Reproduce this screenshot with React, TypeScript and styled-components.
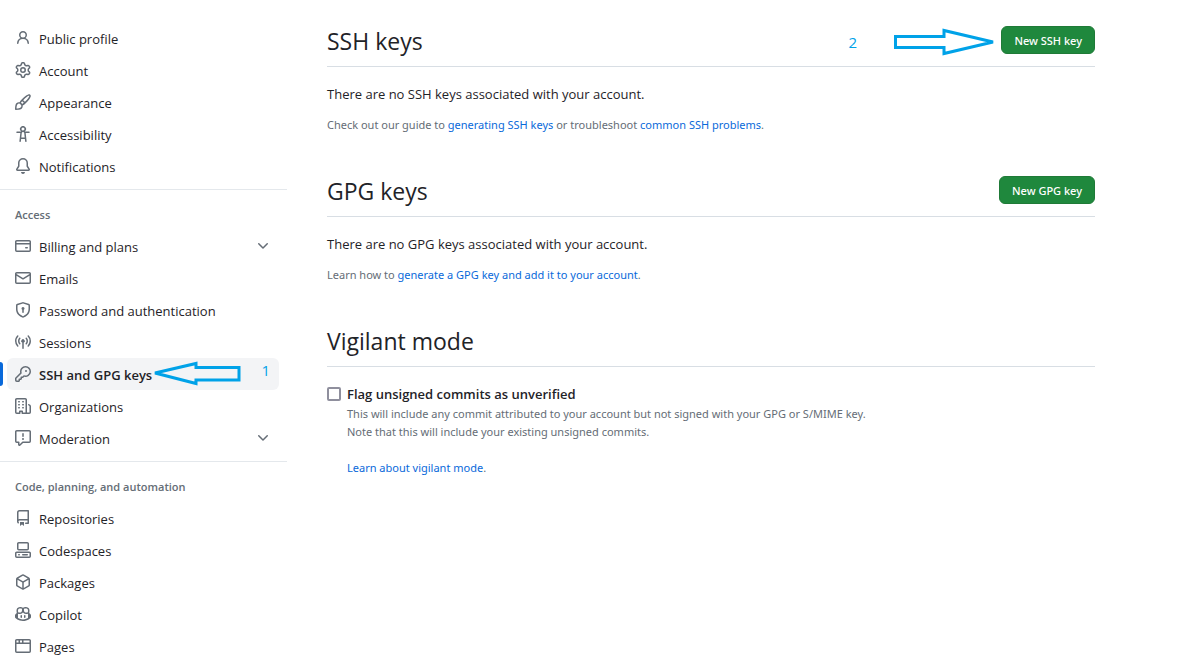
import React, { useState } from "react";
import styled, { createGlobalStyle, css } from "styled-components";

const GlobalStyle = createGlobalStyle`
  *, *::before, *::after { box-sizing: border-box; }
  body {
    margin: 0;
    background: #ffffff;
    color: #1f2328;
    font-family: "Segoe UI", "Open Sans", "Noto Sans", sans-serif;
    font-size: 13px;
    line-height: 20px;
  }
`;

const icons = {
  person:
    "M10.561 8.073a6.005 6.005 0 0 1 3.432 5.142.75.75 0 1 1-1.498.07 4.5 4.5 0 0 0-8.99 0 .75.75 0 0 1-1.498-.07 6.004 6.004 0 0 1 3.431-5.142 3.999 3.999 0 1 1 5.123 0ZM10.5 5a2.5 2.5 0 1 0-5 0 2.5 2.5 0 0 0 5 0Z",
  gear:
    "M8 0a8.2 8.2 0 0 1 .701.031C9.444.095 9.99.645 10.16 1.29l.288 1.107c.018.066.079.158.212.224.231.114.454.243.668.386.123.082.233.09.299.071l1.103-.303c.644-.176 1.392.021 1.82.63.27.385.506.792.704 1.218.315.675.111 1.422-.364 1.891l-.814.806c-.049.048-.098.147-.088.294.016.257.016.515 0 .772-.01.147.038.246.088.294l.814.806c.475.469.679 1.216.364 1.891a7.977 7.977 0 0 1-.704 1.217c-.428.61-1.176.807-1.82.63l-1.102-.302c-.067-.019-.177-.011-.3.071a5.909 5.909 0 0 1-.668.386c-.133.066-.194.158-.211.224l-.29 1.106c-.168.646-.715 1.196-1.458 1.26a8.006 8.006 0 0 1-1.402 0c-.743-.064-1.289-.614-1.458-1.26l-.289-1.106c-.018-.066-.079-.158-.212-.224a5.738 5.738 0 0 1-.668-.386c-.123-.082-.233-.09-.299-.071l-1.103.303c-.644.176-1.392-.021-1.82-.63a8.12 8.12 0 0 1-.704-1.218c-.315-.675-.111-1.422.363-1.891l.815-.806c.05-.048.098-.147.088-.294a6.214 6.214 0 0 1 0-.772c.01-.147-.038-.246-.088-.294l-.815-.806C.635 6.045.431 5.298.746 4.623a7.92 7.92 0 0 1 .704-1.217c.428-.61 1.176-.807 1.82-.63l1.102.302c.067.019.177.011.3-.071.214-.143.437-.272.668-.386.133-.066.194-.158.211-.224l.29-1.106C6.009.645 6.556.095 7.299.03 7.53.01 7.764 0 8 0Zm-.571 1.525c-.036.003-.108.036-.137.146l-.289 1.105c-.147.561-.549.967-.998 1.189-.173.086-.34.183-.5.29-.417.278-.97.423-1.529.27l-1.103-.303c-.109-.03-.175.016-.195.045-.22.312-.412.644-.573.99-.014.031-.021.11.059.19l.815.806c.411.406.562.957.53 1.456a4.709 4.709 0 0 0 0 .582c.032.499-.119 1.05-.53 1.456l-.815.806c-.081.08-.073.159-.059.19.162.346.353.677.573.989.02.03.085.076.195.046l1.102-.303c.56-.153 1.113-.008 1.53.27.161.107.328.204.501.29.447.222.85.629.997 1.189l.289 1.105c.029.109.101.143.137.146a6.6 6.6 0 0 0 1.142 0c.036-.003.108-.036.137-.146l.289-1.105c.147-.561.549-.967.998-1.189.173-.086.34-.183.5-.29.417-.278.97-.423 1.529-.27l1.103.303c.109.029.175-.016.195-.045.22-.313.411-.644.573-.99.014-.031.021-.11-.059-.19l-.815-.806c-.411-.406-.562-.957-.53-1.456a4.709 4.709 0 0 0 0-.582c-.032-.499.119-1.05.53-1.456l.815-.806c.081-.08.073-.159.059-.19a6.464 6.464 0 0 0-.573-.989c-.02-.03-.085-.076-.195-.046l-1.102.303c-.56.153-1.113.008-1.53-.27a4.44 4.44 0 0 0-.501-.29c-.447-.222-.85-.629-.997-1.189l-.289-1.105c-.029-.11-.101-.143-.137-.146a6.6 6.6 0 0 0-1.142 0ZM11 8a3 3 0 1 1-6 0 3 3 0 0 1 6 0ZM9.5 8a1.5 1.5 0 1 0-3.001.001A1.5 1.5 0 0 0 9.5 8Z",
  paintbrush:
    "M11.134 1.535c.7-.509 1.416-.942 2.076-1.155.649-.21 1.463-.267 2.069.34.603.601.568 1.411.368 2.07-.202.668-.624 1.39-1.125 2.096-1.011 1.424-2.496 2.987-3.775 4.249-1.098 1.084-2.132 1.839-3.04 2.3a3.744 3.744 0 0 1-1.055 3.217c-.431.431-1.065.691-1.657.861-.614.177-1.294.287-1.914.357A21.151 21.151 0 0 1 .797 16H.743l.007-.75H.749L.742 16a.75.75 0 0 1-.743-.742l.743-.008-.742.007v-.054a21.25 21.25 0 0 1 .13-2.284c.067-.647.187-1.287.358-1.914.17-.591.43-1.226.86-1.657a3.746 3.746 0 0 1 3.227-1.054c.466-.893 1.225-1.907 2.314-2.982 1.271-1.255 2.833-2.75 4.245-3.777ZM1.62 13.089c-.051.464-.086.929-.104 1.395.466-.018.932-.053 1.396-.104a10.511 10.511 0 0 0 1.668-.309c.526-.151.856-.325 1.011-.48a2.25 2.25 0 1 0-3.182-3.182c-.155.155-.329.485-.48 1.01a10.515 10.515 0 0 0-.309 1.67Zm10.396-10.34c-1.224.89-2.605 2.189-3.822 3.384l1.718 1.718c1.21-1.205 2.51-2.597 3.387-3.833.47-.662.78-1.227.912-1.662.134-.444.032-.551.009-.575h-.001V1.78c-.014-.014-.113-.113-.548.027-.432.14-.995.462-1.655.942Zm-4.832 7.266-.001.001a9.859 9.859 0 0 0 1.63-1.142L7.155 7.216a9.7 9.7 0 0 0-1.161 1.607c.482.302.889.71 1.19 1.192Z",
  accessibility:
    "M9.923 5.302c.063.063.122.129.178.198H14A.75.75 0 0 1 14 7h-3.3l.578 5.163.362 2.997a.75.75 0 0 1-1.49.18L9.868 13H6.132l-.282 2.34a.75.75 0 0 1-1.49-.18l.362-2.997L5.3 7H2a.75.75 0 0 1 0-1.5h3.9a2.54 2.54 0 0 1 .176-.198 3 3 0 1 1 3.847 0ZM9.2 7.073h-.001a1.206 1.206 0 0 0-2.398 0L6.305 11.5h3.39ZM9.5 3a1.5 1.5 0 1 0-3.001.001A1.5 1.5 0 0 0 9.5 3Z",
  bell:
    "M8 16a2 2 0 0 0 1.985-1.75c.017-.137-.097-.25-.235-.25h-3.5c-.138 0-.252.113-.235.25A2 2 0 0 0 8 16ZM3 5a5 5 0 0 1 10 0v2.947c0 .05.015.098.042.139l1.703 2.555A1.519 1.519 0 0 1 13.482 13H2.518a1.516 1.516 0 0 1-1.263-2.36l1.703-2.554A.255.255 0 0 0 3 7.947Zm5-3.5A3.5 3.5 0 0 0 4.5 5v2.947c0 .346-.102.683-.294.97l-1.703 2.556a.017.017 0 0 0-.003.01l.001.006c0 .002.002.004.004.006l.006.004.007.001h10.964l.007-.001.006-.004.004-.006.001-.007a.017.017 0 0 0-.003-.01l-1.703-2.554a1.745 1.745 0 0 1-.294-.97V5A3.5 3.5 0 0 0 8 1.5Z",
  creditCard:
    "M10.75 9a.75.75 0 0 0 0 1.5h1.5a.75.75 0 0 0 0-1.5h-1.5ZM0 3.75C0 2.784.784 2 1.75 2h12.5c.966 0 1.75.784 1.75 1.75v8.5A1.75 1.75 0 0 1 14.25 14H1.75A1.75 1.75 0 0 1 0 12.25ZM14.5 6.5h-13v5.75c0 .138.112.25.25.25h12.5a.25.25 0 0 0 .25-.25Zm0-2.75a.25.25 0 0 0-.25-.25H1.75a.25.25 0 0 0-.25.25V5h13Z",
  mail:
    "M1.75 2h12.5c.966 0 1.75.784 1.75 1.75v8.5A1.75 1.75 0 0 1 14.25 14H1.75A1.75 1.75 0 0 1 0 12.25v-8.5C0 2.784.784 2 1.75 2ZM1.5 12.251c0 .138.112.25.25.25h12.5a.25.25 0 0 0 .25-.25V5.809L8.38 9.397a.75.75 0 0 1-.76 0L1.5 5.809v6.442Zm13-8.181v-.32a.25.25 0 0 0-.25-.25H1.75a.25.25 0 0 0-.25.25v.32L8 7.88Z",
  shieldLock:
    "m8.533.133 5.25 1.68A1.75 1.75 0 0 1 15 3.48V7c0 1.566-.32 3.182-1.303 4.682-.983 1.498-2.585 2.813-5.032 3.855a1.697 1.697 0 0 1-1.33 0c-2.447-1.042-4.049-2.357-5.032-3.855C1.32 10.182 1 8.566 1 7V3.48a1.755 1.755 0 0 1 1.217-1.667l5.25-1.68a1.748 1.748 0 0 1 1.066 0Zm-.61 1.429.001.001-5.25 1.68a.251.251 0 0 0-.174.237V7c0 1.36.275 2.666 1.057 3.859.784 1.194 2.121 2.342 4.366 3.298a.196.196 0 0 0 .154 0c2.245-.957 3.582-2.103 4.366-3.297C13.225 9.666 13.5 8.358 13.5 7V3.48a.25.25 0 0 0-.174-.238l-5.25-1.68a.25.25 0 0 0-.153 0ZM9.5 6.5c0 .536-.286 1.032-.75 1.3v2.45a.75.75 0 0 1-1.5 0V7.8A1.5 1.5 0 1 1 9.5 6.5Z",
  broadcast:
    "M8.75 8.582v5.668a.75.75 0 0 1-1.5 0V8.582a1.75 1.75 0 1 1 1.5 0Zm3.983-7.125a.75.75 0 0 1 1.06.026A7.976 7.976 0 0 1 16 7c0 2.139-.84 4.083-2.207 5.517a.75.75 0 1 1-1.086-1.034A6.474 6.474 0 0 0 14.5 7a6.474 6.474 0 0 0-1.793-4.483.75.75 0 0 1 .026-1.06Zm-9.466 0c.3.286.312.76.026 1.06A6.474 6.474 0 0 0 1.5 7a6.47 6.47 0 0 0 1.793 4.483.75.75 0 0 1-1.086 1.034A7.973 7.973 0 0 1 0 7c0-2.139.84-4.083 2.207-5.517a.75.75 0 0 1 1.06-.026Zm8.556 2.321A4.988 4.988 0 0 1 13 7a4.988 4.988 0 0 1-1.177 3.222.75.75 0 1 1-1.146-.967A3.487 3.487 0 0 0 11.5 7c0-.86-.309-1.645-.823-2.255a.75.75 0 0 1 1.146-.967Zm-6.492.958A3.48 3.48 0 0 0 4.5 7a3.48 3.48 0 0 0 .823 2.255.75.75 0 0 1-1.146.967A4.981 4.981 0 0 1 3 7a4.982 4.982 0 0 1 1.188-3.236.75.75 0 1 1 1.143.972Z",
  key:
    "M10.5 0a5.499 5.499 0 1 1-1.288 10.848l-.932.932a.749.749 0 0 1-.53.22H7v.75a.749.749 0 0 1-.22.53l-.5.5a.749.749 0 0 1-.53.22H5v.75a.749.749 0 0 1-.22.53l-.5.5a.749.749 0 0 1-.53.22h-2A1.75 1.75 0 0 1 0 14.25v-2c0-.199.079-.389.22-.53l4.932-4.932A5.5 5.5 0 0 1 10.5 0Zm-4 5.5c-.001.431.069.86.205 1.269a.75.75 0 0 1-.181.768L1.5 12.56v1.69c0 .138.112.25.25.25h1.69l.06-.06v-1.19a.75.75 0 0 1 .75-.75h1.19l.06-.06v-1.19a.75.75 0 0 1 .75-.75h1.19l1.023-1.025a.75.75 0 0 1 .768-.18A4 4 0 1 0 6.5 5.5ZM11 6a1 1 0 1 1 0-2 1 1 0 0 1 0 2Z",
  organization:
    "M1.75 16A1.75 1.75 0 0 1 0 14.25V1.75C0 .784.784 0 1.75 0h8.5C11.216 0 12 .784 12 1.75v12.5c0 .085-.006.168-.018.25h2.268a.25.25 0 0 0 .25-.25V8.285a.25.25 0 0 0-.111-.208l-1.055-.703a.749.749 0 1 1 .832-1.248l1.055.703c.487.325.779.871.779 1.456v5.965A1.75 1.75 0 0 1 14.25 16h-3.5a.766.766 0 0 1-.197-.026c-.099.017-.2.026-.303.026h-3a.75.75 0 0 1-.75-.75V14h-1v1.25a.75.75 0 0 1-.75.75Zm-.25-1.75c0 .138.112.25.25.25H4v-1.25a.75.75 0 0 1 .75-.75h2.5a.75.75 0 0 1 .75.75v1.25h2.25a.25.25 0 0 0 .25-.25V1.75a.25.25 0 0 0-.25-.25h-8.5a.25.25 0 0 0-.25.25ZM3.75 6h.5a.75.75 0 0 1 0 1.5h-.5a.75.75 0 0 1 0-1.5ZM3 3.75A.75.75 0 0 1 3.75 3h.5a.75.75 0 0 1 0 1.5h-.5A.75.75 0 0 1 3 3.75Zm4 3A.75.75 0 0 1 7.75 6h.5a.75.75 0 0 1 0 1.5h-.5A.75.75 0 0 1 7 6.75ZM7.75 3h.5a.75.75 0 0 1 0 1.5h-.5a.75.75 0 0 1 0-1.5ZM3 9.75A.75.75 0 0 1 3.75 9h.5a.75.75 0 0 1 0 1.5h-.5A.75.75 0 0 1 3 9.75ZM7.75 9h.5a.75.75 0 0 1 0 1.5h-.5a.75.75 0 0 1 0-1.5Z",
  report:
    "M0 1.75C0 .784.784 0 1.75 0h12.5C15.216 0 16 .784 16 1.75v9.5A1.75 1.75 0 0 1 14.25 13H8.06l-2.573 2.573A1.458 1.458 0 0 1 3 14.543V13H1.75A1.75 1.75 0 0 1 0 11.25Zm1.75-.25a.25.25 0 0 0-.25.25v9.5c0 .138.112.25.25.25h2a.75.75 0 0 1 .75.75v2.19l2.72-2.72a.749.749 0 0 1 .53-.22h6.5a.25.25 0 0 0 .25-.25v-9.5a.25.25 0 0 0-.25-.25Zm7 2.25v2.5a.75.75 0 0 1-1.5 0v-2.5a.75.75 0 0 1 1.5 0ZM9 9a1 1 0 1 1-2 0 1 1 0 0 1 2 0Z",
  repo:
    "M2 2.5A2.5 2.5 0 0 1 4.5 0h8.75a.75.75 0 0 1 .75.75v12.5a.75.75 0 0 1-.75.75h-2.5a.75.75 0 0 1 0-1.5h1.75v-2h-8a1 1 0 0 0-.714 1.7.75.75 0 1 1-1.072 1.05A2.495 2.495 0 0 1 2 11.5Zm10.5-1h-8a1 1 0 0 0-1 1v6.708A2.486 2.486 0 0 1 4.5 9h8ZM5 12.25a.25.25 0 0 1 .25-.25h3.5a.25.25 0 0 1 .25.25v3.25a.25.25 0 0 1-.4.2l-1.45-1.087a.249.249 0 0 0-.3 0L5.4 15.7a.25.25 0 0 1-.4-.2Z",
  codespaces:
    "M0 11.25c0-.966.784-1.75 1.75-1.75h12.5c.966 0 1.75.784 1.75 1.75v3A1.75 1.75 0 0 1 14.25 16H1.75A1.75 1.75 0 0 1 0 14.25Zm2-9.5C2 .784 2.784 0 3.75 0h8.5C13.216 0 14 .784 14 1.75v5a1.75 1.75 0 0 1-1.75 1.75h-8.5A1.75 1.75 0 0 1 2 6.75Zm1.75-.25a.25.25 0 0 0-.25.25v5c0 .138.112.25.25.25h8.5a.25.25 0 0 0 .25-.25v-5a.25.25 0 0 0-.25-.25Zm-2 9.5a.25.25 0 0 0-.25.25v3c0 .138.112.25.25.25h12.5a.25.25 0 0 0 .25-.25v-3a.25.25 0 0 0-.25-.25ZM7 12.75a.75.75 0 0 1 .75-.75h4.5a.75.75 0 0 1 0 1.5h-4.5a.75.75 0 0 1-.75-.75Zm-4 0a.75.75 0 0 1 .75-.75h.5a.75.75 0 0 1 0 1.5h-.5a.75.75 0 0 1-.75-.75Z",
  package:
    "m8.878.392 5.25 3.045c.54.314.872.89.872 1.514v6.098a1.75 1.75 0 0 1-.872 1.514l-5.25 3.045a1.75 1.75 0 0 1-1.756 0l-5.25-3.045A1.75 1.75 0 0 1 1 11.049V4.951c0-.624.332-1.201.872-1.514L7.122.392a1.75 1.75 0 0 1 1.756 0ZM7.875 1.69l-4.63 2.685L8 7.133l4.755-2.758-4.63-2.685a.248.248 0 0 0-.25 0ZM2.5 5.677v5.372c0 .09.047.171.125.216l4.625 2.683V8.432Zm6.25 8.271 4.625-2.683a.25.25 0 0 0 .125-.216V5.677L8.75 8.432Z",
  copilot:
    "M7.998 15.035c-4.562 0-7.873-2.914-7.998-3.749V9.338c.085-.628.677-1.686 1.588-2.065.013-.07.024-.143.036-.218.029-.183.06-.384.126-.612-.201-.508-.254-1.084-.254-1.656 0-.87.128-1.769.693-2.484.579-.733 1.494-1.124 2.724-1.261 1.206-.134 2.262.034 2.944.765.05.053.096.108.139.165.044-.057.094-.112.143-.165.682-.731 1.738-.899 2.944-.765 1.23.137 2.145.528 2.724 1.261.566.715.693 1.614.693 2.484 0 .572-.053 1.148-.254 1.656.066.228.098.429.126.612.012.076.024.148.037.218.924.385 1.522 1.471 1.591 2.095v1.872c0 .766-3.351 3.795-8.002 3.795Zm0-1.485c2.28 0 4.584-1.11 5.002-1.433V7.862l-.023-.116c-.49.21-1.075.291-1.727.291-1.146 0-2.059-.327-2.71-.991A3.222 3.222 0 0 1 8 6.303a3.24 3.24 0 0 1-.544.743c-.65.664-1.563.991-2.71.991-.652 0-1.236-.081-1.727-.291l-.023.116v4.255c.419.323 2.722 1.433 5.002 1.433ZM6.762 2.83c-.193-.206-.637-.413-1.682-.297-1.019.113-1.479.404-1.713.7-.247.312-.369.789-.369 1.554 0 .793.129 1.171.308 1.371.162.181.519.379 1.442.379.853 0 1.339-.235 1.638-.54.315-.322.527-.827.617-1.553.117-.935-.037-1.395-.241-1.614Zm4.155-.297c-1.044-.116-1.488.091-1.681.297-.204.219-.359.679-.242 1.614.091.726.303 1.231.618 1.553.299.305.784.54 1.638.54.922 0 1.28-.198 1.442-.379.179-.2.308-.578.308-1.371 0-.765-.123-1.242-.37-1.554-.233-.296-.693-.587-1.713-.7ZM6.25 9.037a.75.75 0 0 1 .75.75v1.501a.75.75 0 0 1-1.5 0V9.787a.75.75 0 0 1 .75-.75Zm4.25.75v1.501a.75.75 0 0 1-1.5 0V9.787a.75.75 0 0 1 1.5 0Z",
  browser:
    "M0 2.75C0 1.784.784 1 1.75 1h12.5c.966 0 1.75.784 1.75 1.75v10.5A1.75 1.75 0 0 1 14.25 15H1.75A1.75 1.75 0 0 1 0 13.25ZM14.5 6h-13v7.25c0 .138.112.25.25.25h12.5a.25.25 0 0 0 .25-.25Zm-6-3.5v2h6V2.75a.25.25 0 0 0-.25-.25ZM5 2.5v2h2v-2Zm-3.25 0a.25.25 0 0 0-.25.25V4.5h2v-2Z",
  chevronDown:
    "M12.78 5.22a.749.749 0 0 1 0 1.06l-4.25 4.25a.749.749 0 0 1-1.06 0L3.22 6.28a.749.749 0 1 1 1.06-1.06L8 8.939l3.72-3.719a.749.749 0 0 1 1.06 0Z",
};

type IconName = keyof typeof icons;

const IconSvg = styled.svg`
  flex: none;
  display: block;
  margin-bottom: 2px;
  fill: #656d76;
`;

const Icon = ({ name }: { name: IconName }) => (
  <IconSvg width="16" height="16" viewBox="0 0 16 16" aria-hidden="true">
    <path d={icons[name]} />
  </IconSvg>
);

const Page = styled.div`
  display: flex;
  align-items: flex-start;
  gap: 40px;
`;

const Sidebar = styled.nav`
  flex: none;
  width: 287px;
  padding-top: 22px;
`;

const NavGroup = styled.section`
  & + & {
    margin-top: 7px;
    padding-top: 8px;
    border-top: 1px solid #e4e8ec;
  }
`;

const GroupTitle = styled.h3`
  margin: 0;
  padding: 7px 15px 5px;
  color: #656d76;
  font-size: 11px;
  font-weight: 600;
  line-height: 20px;
`;

const NavList = styled.ul`
  margin: 0;
  padding: 0 8px 0 7px;
  list-style: none;
`;

const NavItem = styled.li`
  position: relative;
`;

const rowStyle = css<{ $active?: boolean }>`
  display: flex;
  align-items: center;
  gap: 8px;
  width: 100%;
  height: 32px;
  padding: 2px 8px 0;
  border: 0;
  border-radius: 6px;
  background: ${(p) => (p.$active ? "#f3f4f6" : "transparent")};
  color: #1f2328;
  font: inherit;
  font-weight: ${(p) => (p.$active ? 600 : 400)};
  text-align: left;
  text-decoration: none;
  cursor: pointer;
`;

const NavLink = styled.a<{ $active?: boolean }>`
  ${rowStyle}
`;

const NavToggle = styled.button<{ $active?: boolean }>`
  ${rowStyle}
`;

const NavLabel = styled.span`
  flex: 1;
`;

const ActiveBar = styled.span`
  position: absolute;
  left: -10px;
  top: 4px;
  width: 6px;
  height: 24px;
  border-radius: 6px;
  background: #0969da;
`;

const ArrowSvg = styled.svg`
  display: block;
  fill: none;
  stroke: #00a2e8;
  stroke-width: 3;
`;

const StepNumber = styled.span`
  color: #00a2e8;
  font-size: 15px;
  line-height: 20px;
`;

const NavCallout = styled.span`
  position: absolute;
  top: 2px;
  right: 9px;
  display: flex;
  align-items: flex-start;
  gap: 20px;
  pointer-events: none;
`;

const HeaderCallout = styled.span`
  position: absolute;
  top: 2px;
  right: 100px;
  display: flex;
  align-items: center;
  gap: 36px;
  pointer-events: none;
`;

const Content = styled.main`
  flex: 1;
  max-width: 768px;
  min-width: 0;
  padding-top: 26px;
  margin-right: 40px;
`;

const Section = styled.section`
  & + & { margin-top: 42px; }
`;

const SectionHeader = styled.header`
  position: relative;
  display: flex;
  align-items: center;
  justify-content: space-between;
  padding-bottom: 12px;
  margin-bottom: 17px;
  border-bottom: 1px solid #d8dee4;
`;

const Title = styled.h2`
  margin: 0;
  padding-top: 2px;
  font-size: 23px;
  font-weight: 400;
  line-height: 26px;
`;

const PrimaryButton = styled.button`
  height: 28px;
  padding: 2px 12px 0;
  border: 1px solid #1f7a37;
  border-radius: 6px;
  background: #1f883d;
  color: #ffffff;
  font: inherit;
  font-family: "Noto Sans", "Open Sans", sans-serif;
  font-size: 11px;
  font-weight: 500;
  cursor: pointer;
`;

const Lead = styled.p`
  margin: 0 0 12px;
`;

const Note = styled.p`
  margin: 0;
  color: #656d76;
  font-family: "Noto Sans", "Open Sans", sans-serif;
  font-size: 11px;
  line-height: 18px;
`;

const TextLink = styled.a`
  color: #0969da;
  text-decoration: none;
`;

const CheckRow = styled.div`
  display: flex;
  align-items: flex-start;
  gap: 6px;
`;

const Checkbox = styled.input`
  appearance: none;
  flex: none;
  width: 14px;
  height: 14px;
  margin: 3px 0 0;
  border: 2px solid #8f8f9d;
  border-radius: 2px;
  background: #ffffff;

  &:checked { background: #0969da; }
`;

const CheckText = styled.div`
  display: flex;
  flex-direction: column;
  align-items: flex-start;
`;

const CheckLabel = styled.label`
  margin-bottom: 1px;
  font-weight: 600;
`;

const LinkNote = styled(Note)`
  margin-top: 18px;
`;

type Item = { label: string; icon: IconName; toggle?: boolean; active?: boolean };

const groups: { title?: string; items: Item[] }[] = [
  {
    items: [
      { label: "Public profile", icon: "person" },
      { label: "Account", icon: "gear" },
      { label: "Appearance", icon: "paintbrush" },
      { label: "Accessibility", icon: "accessibility" },
      { label: "Notifications", icon: "bell" },
    ],
  },
  {
    title: "Access",
    items: [
      { label: "Billing and plans", icon: "creditCard", toggle: true },
      { label: "Emails", icon: "mail" },
      { label: "Password and authentication", icon: "shieldLock" },
      { label: "Sessions", icon: "broadcast" },
      { label: "SSH and GPG keys", icon: "key", active: true },
      { label: "Organizations", icon: "organization" },
      { label: "Moderation", icon: "report", toggle: true },
    ],
  },
  {
    title: "Code, planning, and automation",
    items: [
      { label: "Repositories", icon: "repo" },
      { label: "Codespaces", icon: "codespaces" },
      { label: "Packages", icon: "package" },
      { label: "Copilot", icon: "copilot" },
      { label: "Pages", icon: "browser" },
    ],
  },
];

const NavEntry = ({ item }: { item: Item }) => (
  <NavItem>
    {item.toggle ? (
      <NavToggle type="button" aria-expanded={false}>
        <Icon name={item.icon} />
        <NavLabel>{item.label}</NavLabel>
        <Icon name="chevronDown" />
      </NavToggle>
    ) : (
      <NavLink href="#" $active={item.active} aria-current={item.active ? "page" : undefined}>
        <Icon name={item.icon} />
        <NavLabel>{item.label}</NavLabel>
      </NavLink>
    )}
    {item.active && (
      <>
        <ActiveBar />
        <NavCallout>
          <ArrowSvg width="88" height="26" viewBox="0 0 88 26" aria-hidden="true">
            <path d="M2 13 43 3.500V7.500H86V20H43V23.500Z" />
          </ArrowSvg>
          <StepNumber>1</StepNumber>
        </NavCallout>
      </>
    )}
  </NavItem>
);

export default function App() {
  const [flagged, setFlagged] = useState(false);

  return (
    <>
      <GlobalStyle />
      <Page>
        <Sidebar aria-label="Settings">
          {groups.map((group, i) => (
            <NavGroup key={i}>
              {group.title && <GroupTitle>{group.title}</GroupTitle>}
              <NavList>
                {group.items.map((item) => (
                  <NavEntry key={item.label} item={item} />
                ))}
              </NavList>
            </NavGroup>
          ))}
        </Sidebar>

        <Content>
          <Section>
            <SectionHeader>
              <Title>SSH keys</Title>
              <HeaderCallout>
                <StepNumber>2</StepNumber>
                <ArrowSvg width="102" height="28" viewBox="0 0 102 28" aria-hidden="true">
                  <path d="M2.500 8.500H51V2.500L100 14 51 25.500V19.500H2.500Z" />
                </ArrowSvg>
              </HeaderCallout>
              <PrimaryButton type="button">New SSH key</PrimaryButton>
            </SectionHeader>
            <Lead>There are no SSH keys associated with your account.</Lead>
            <Note>
              Check out our guide to <TextLink href="#">generating SSH keys</TextLink> or troubleshoot{" "}
              <TextLink href="#">common SSH problems</TextLink>.
            </Note>
          </Section>

          <Section>
            <SectionHeader>
              <Title>GPG keys</Title>
              <PrimaryButton type="button">New GPG key</PrimaryButton>
            </SectionHeader>
            <Lead>There are no GPG keys associated with your account.</Lead>
            <Note>
              Learn how to <TextLink href="#">generate a GPG key and add it to your account</TextLink>.
            </Note>
          </Section>

          <Section>
            <SectionHeader>
              <Title>Vigilant mode</Title>
            </SectionHeader>
            <CheckRow>
              <Checkbox
                type="checkbox"
                id="vigilant"
                checked={flagged}
                onChange={(e) => setFlagged(e.target.checked)}
              />
              <CheckText>
                <CheckLabel htmlFor="vigilant">Flag unsigned commits as unverified</CheckLabel>
                <Note>
                  This will include any commit attributed to your account but not signed with your GPG or S/MIME key.
                  <br />
                  Note that this will include your existing unsigned commits.
                </Note>
                <LinkNote>
                  <TextLink href="#">Learn about vigilant mode</TextLink>.
                </LinkNote>
              </CheckText>
            </CheckRow>
          </Section>
        </Content>
      </Page>
    </>
  );
}
